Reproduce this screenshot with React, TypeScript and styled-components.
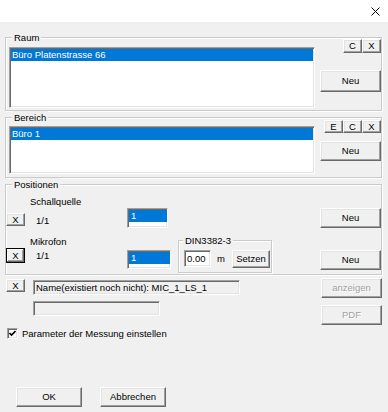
import React from "react";
import styled, { createGlobalStyle, css } from "styled-components";

const Global = createGlobalStyle`
  html, body { margin: 0; padding: 0; background: #f0f0f0; }
  body {
    font-family: "Liberation Sans", Arial, sans-serif;
    font-size: 9.5px;
    color: #000;
  }
  * { box-sizing: border-box; }
`;

const raised = css`
  background: #f0f0f0;
  border: 1px solid;
  border-color: #ffffff #696969 #696969 #ffffff;
  box-shadow: inset -1px -1px #a0a0a0, inset 1px 1px #e3e3e3;
`;

const sunken = css`
  border: 1px solid;
  border-color: #a0a0a0 #ffffff #ffffff #a0a0a0;
  box-shadow: inset 1px 1px #696969, inset -1px -1px #e3e3e3;
  padding: 1px;
`;

const Dialog = styled.div`
  width: 388px;
  height: 412px;
  background: #f0f0f0;
  display: flex;
  flex-direction: column;
  overflow: hidden;
`;

const TitleBar = styled.div`
  height: 22px;
  flex: none;
  background: #ffffff;
  display: flex;
  justify-content: flex-end;
  align-items: flex-start;
  padding: 7px 8px 0 0;
`;

const Body = styled.div`
  display: flex;
  flex-direction: column;
  padding: 15px 6px 0 5px;
`;

const Group = styled.div<{ $mt?: number }>`
  position: relative;
  margin-top: ${(p) => p.$mt ?? 0}px;
  border: 1px solid #cacaca;
  box-shadow: inset 1px 1px #ffffff, 1px 1px #ffffff;
`;

const Legend = styled.span<{ $left?: number }>`
  position: absolute;
  top: -7px;
  left: ${(p) => p.$left ?? 6}px;
  padding: 0 2px;
  line-height: 13px;
  background: #f0f0f0;
  white-space: nowrap;
`;

const ListGroupBody = styled.div<{ $pt: number; $pb: number }>`
  display: grid;
  grid-template-columns: 306px 1fr;
  column-gap: 5px;
  padding: ${(p) => p.$pt}px 0 ${(p) => p.$pb}px 3px;
`;

const ListBox = styled.div<{ $h: number; $mt: number }>`
  ${sunken};
  background: #ffffff;
  height: ${(p) => p.$h}px;
  margin-top: ${(p) => p.$mt}px;
`;

const SelectedItem = styled.div`
  background: #0078d7;
  color: #ffffff;
  height: 12px;
  line-height: 12px;
  padding-left: 1px;
  white-space: nowrap;
`;

const SideColumn = styled.div`
  display: flex;
  flex-direction: column;
`;

const SmallButtons = styled.div`
  display: flex;
  justify-content: flex-end;
`;

const Button = styled.button<{
  $w?: number;
  $h?: number;
  $mt?: number;
  $ml?: number;
  $disabled?: boolean;
  $focused?: boolean;
}>`
  ${raised};
  width: ${(p) => (p.$w ? `${p.$w}px` : "100%")};
  height: ${(p) => p.$h ?? 20}px;
  margin: ${(p) => p.$mt ?? 0}px 0 0 ${(p) => p.$ml ?? 0}px;
  padding: 0;
  font-family: inherit;
  font-size: 9.5px;
  line-height: 1;
  color: ${(p) => (p.$disabled ? "#a0a0a0" : "#000")};
  text-shadow: ${(p) => (p.$disabled ? "1px 1px #ffffff" : "none")};
  display: flex;
  align-items: center;
  justify-content: center;
  ${(p) =>
    p.$focused &&
    css`
      border-color: #000;
      box-shadow: inset -1px -1px #696969, inset 1px 1px #ffffff,
        inset -2px -2px #a0a0a0;
    `}
`;

const PosGrid = styled.div`
  display: grid;
  grid-template-columns: 19px 102px 51px 94px 1fr 61px;
  grid-template-rows: 12px 20px 8px 12px 25px;
  padding: 11px 0 1px 0;
`;

const Cell = styled.div<{ $col: string; $row: string; $mt?: number; $pl?: number }>`
  grid-column: ${(p) => p.$col};
  grid-row: ${(p) => p.$row};
  margin-top: ${(p) => p.$mt ?? 0}px;
  padding-left: ${(p) => p.$pl ?? 0}px;
  line-height: 12px;
  white-space: nowrap;
`;

const MiniList = styled.div<{ $w: number; $h: number }>`
  ${sunken};
  background: #ffffff;
  width: ${(p) => p.$w}px;
  height: ${(p) => p.$h}px;
  padding: 1px 0 0 1px;
`;

const MiniItem = styled.div`
  background: #0078d7;
  color: #fff;
  height: 12px;
  line-height: 12px;
  padding-left: 2px;
`;

const DinGroup = styled(Group)`
  grid-column: 4;
  grid-row: 4 / 6;
  margin-top: 4px;
  display: flex;
  align-items: flex-start;
  padding: 9px 1px 0 5px;
`;

const Edit = styled.div<{ $w: number; $h: number }>`
  ${sunken};
  background: #fff;
  width: ${(p) => p.$w}px;
  height: ${(p) => p.$h}px;
  line-height: 13px;
  padding: 1px 0 0 2px;
`;

const Unit = styled.span`
  margin-left: 6px;
  line-height: 17px;
`;

const Spacer = styled.div`
  flex: 1;
`;

const NameGrid = styled.div`
  display: grid;
  grid-template-columns: 19px 1fr 61px;
  grid-template-rows: 20px 27px;
  column-gap: 8px;
  margin: 3px 0 0 1px;
`;

const Field = styled.div<{ $w: number; $mt: number }>`
  ${sunken};
  background: #f0f0f0;
  width: ${(p) => p.$w}px;
  height: 15px;
  margin-top: ${(p) => p.$mt}px;
  line-height: 12px;
  padding: 1px 0 0 2px;
  white-space: nowrap;
  overflow: hidden;
`;

const GridSlot = styled.div<{ $col: number; $row: number }>`
  grid-column: ${(p) => p.$col};
  grid-row: ${(p) => p.$row};
`;

const CheckRow = styled.label`
  display: flex;
  align-items: center;
  gap: 4px;
  height: 13px;
  margin: 2px 0 0 2px;
  line-height: 13px;
`;

const CheckBox = styled.span`
  ${sunken};
  padding: 0;
  width: 11px;
  height: 11px;
  background: #fff;
  display: flex;
  align-items: center;
  justify-content: center;
`;

const Footer = styled.div`
  display: flex;
  margin-top: 47px;
`;

const CloseIcon = () => (
  <svg width="9" height="9" viewBox="0 0 9 9">
    <path d="M0.5 0.5 L8.5 8.5 M8.5 0.5 L0.5 8.5" stroke="#000" strokeWidth="1" fill="none" />
  </svg>
);

export default function App() {
  return (
    <>
      <Global />
      <Dialog>
        <TitleBar>
          <CloseIcon />
        </TitleBar>
        <Body>
          <Group>
            <Legend>Raum</Legend>
            <ListGroupBody $pt={1} $pb={2}>
              <ListBox $h={61} $mt={8}>
                <SelectedItem>Büro Platenstrasse 66</SelectedItem>
              </ListBox>
              <SideColumn>
                <SmallButtons>
                  <Button $w={19} $h={14}>C</Button>
                  <Button $w={19} $h={14}>X</Button>
                </SmallButtons>
                <Button $h={22} $mt={17}>Neu</Button>
              </SideColumn>
            </ListGroupBody>
          </Group>

          <Group $mt={6}>
            <Legend>Bereich</Legend>
            <ListGroupBody $pt={2} $pb={3}>
              <ListBox $h={48} $mt={6}>
                <SelectedItem>Büro 1</SelectedItem>
              </ListBox>
              <SideColumn>
                <SmallButtons>
                  <Button $w={19} $h={13}>E</Button>
                  <Button $w={19} $h={13}>C</Button>
                  <Button $w={19} $h={13}>X</Button>
                </SmallButtons>
                <Button $h={20} $mt={8}>Neu</Button>
              </SideColumn>
            </ListGroupBody>
          </Group>

          <Group $mt={6}>
            <Legend>Positionen</Legend>
            <PosGrid>
              <Cell $col="2 / 4" $row="1" $pl={5}>Schallquelle</Cell>
              <Cell $col="1" $row="2" $mt={5}>
                <Button $w={19} $h={13}>X</Button>
              </Cell>
              <Cell $col="2" $row="2" $mt={7} $pl={11}>1/1</Cell>
              <Cell $col="3" $row="2">
                <MiniList $w={41} $h={20}>
                  <MiniItem>1</MiniItem>
                </MiniList>
              </Cell>
              <Cell $col="6" $row="2">
                <Button $h={20}>Neu</Button>
              </Cell>

              <Cell $col="2 / 4" $row="4" $pl={5}>Mikrofon</Cell>
              <Cell $col="1" $row="5">
                <Button $w={19} $h={15} $focused>X</Button>
              </Cell>
              <Cell $col="2" $row="5" $mt={2} $pl={11}>1/1</Cell>
              <Cell $col="3" $row="5" $mt={2}>
                <MiniList $w={44} $h={19}>
                  <MiniItem>1</MiniItem>
                </MiniList>
              </Cell>
              <DinGroup>
                <Legend $left={4}>DIN3382-3</Legend>
                <Edit $w={27} $h={17}>0.00</Edit>
                <Unit>m</Unit>
                <Spacer />
                <Button $w={38} $h={18}>Setzen</Button>
              </DinGroup>
              <Cell $col="6" $row="5" $mt={2}>
                <Button $h={20}>Neu</Button>
              </Cell>
            </PosGrid>
          </Group>

          <NameGrid>
            <GridSlot $col={1} $row={1}>
              <Button $w={19} $h={13} $mt={1}>X</Button>
            </GridSlot>
            <GridSlot $col={2} $row={1}>
              <Field $w={207} $mt={2}>Name(existiert noch nicht): MIC_1_LS_1</Field>
            </GridSlot>
            <GridSlot $col={3} $row={1}>
              <Button $h={20} $disabled>anzeigen</Button>
            </GridSlot>
            <GridSlot $col={2} $row={2}>
              <Field $w={127} $mt={3} />
            </GridSlot>
            <GridSlot $col={3} $row={2}>
              <Button $h={20} $mt={7} $disabled>PDF</Button>
            </GridSlot>
          </NameGrid>

          <CheckRow>
            <CheckBox>
              <svg width="7" height="7" viewBox="0 0 7 7">
                <path d="M0.5 3 L2.5 5 L6.5 1" stroke="#000" strokeWidth="1.6" fill="none" />
              </svg>
            </CheckBox>
            Parameter der Messung einstellen
          </CheckRow>

          <Footer>
            <Button $w={66} $h={20} $ml={11}>OK</Button>
            <Button $w={66} $h={20} $ml={18}>Abbrechen</Button>
          </Footer>
        </Body>
      </Dialog>
    </>
  );
}
